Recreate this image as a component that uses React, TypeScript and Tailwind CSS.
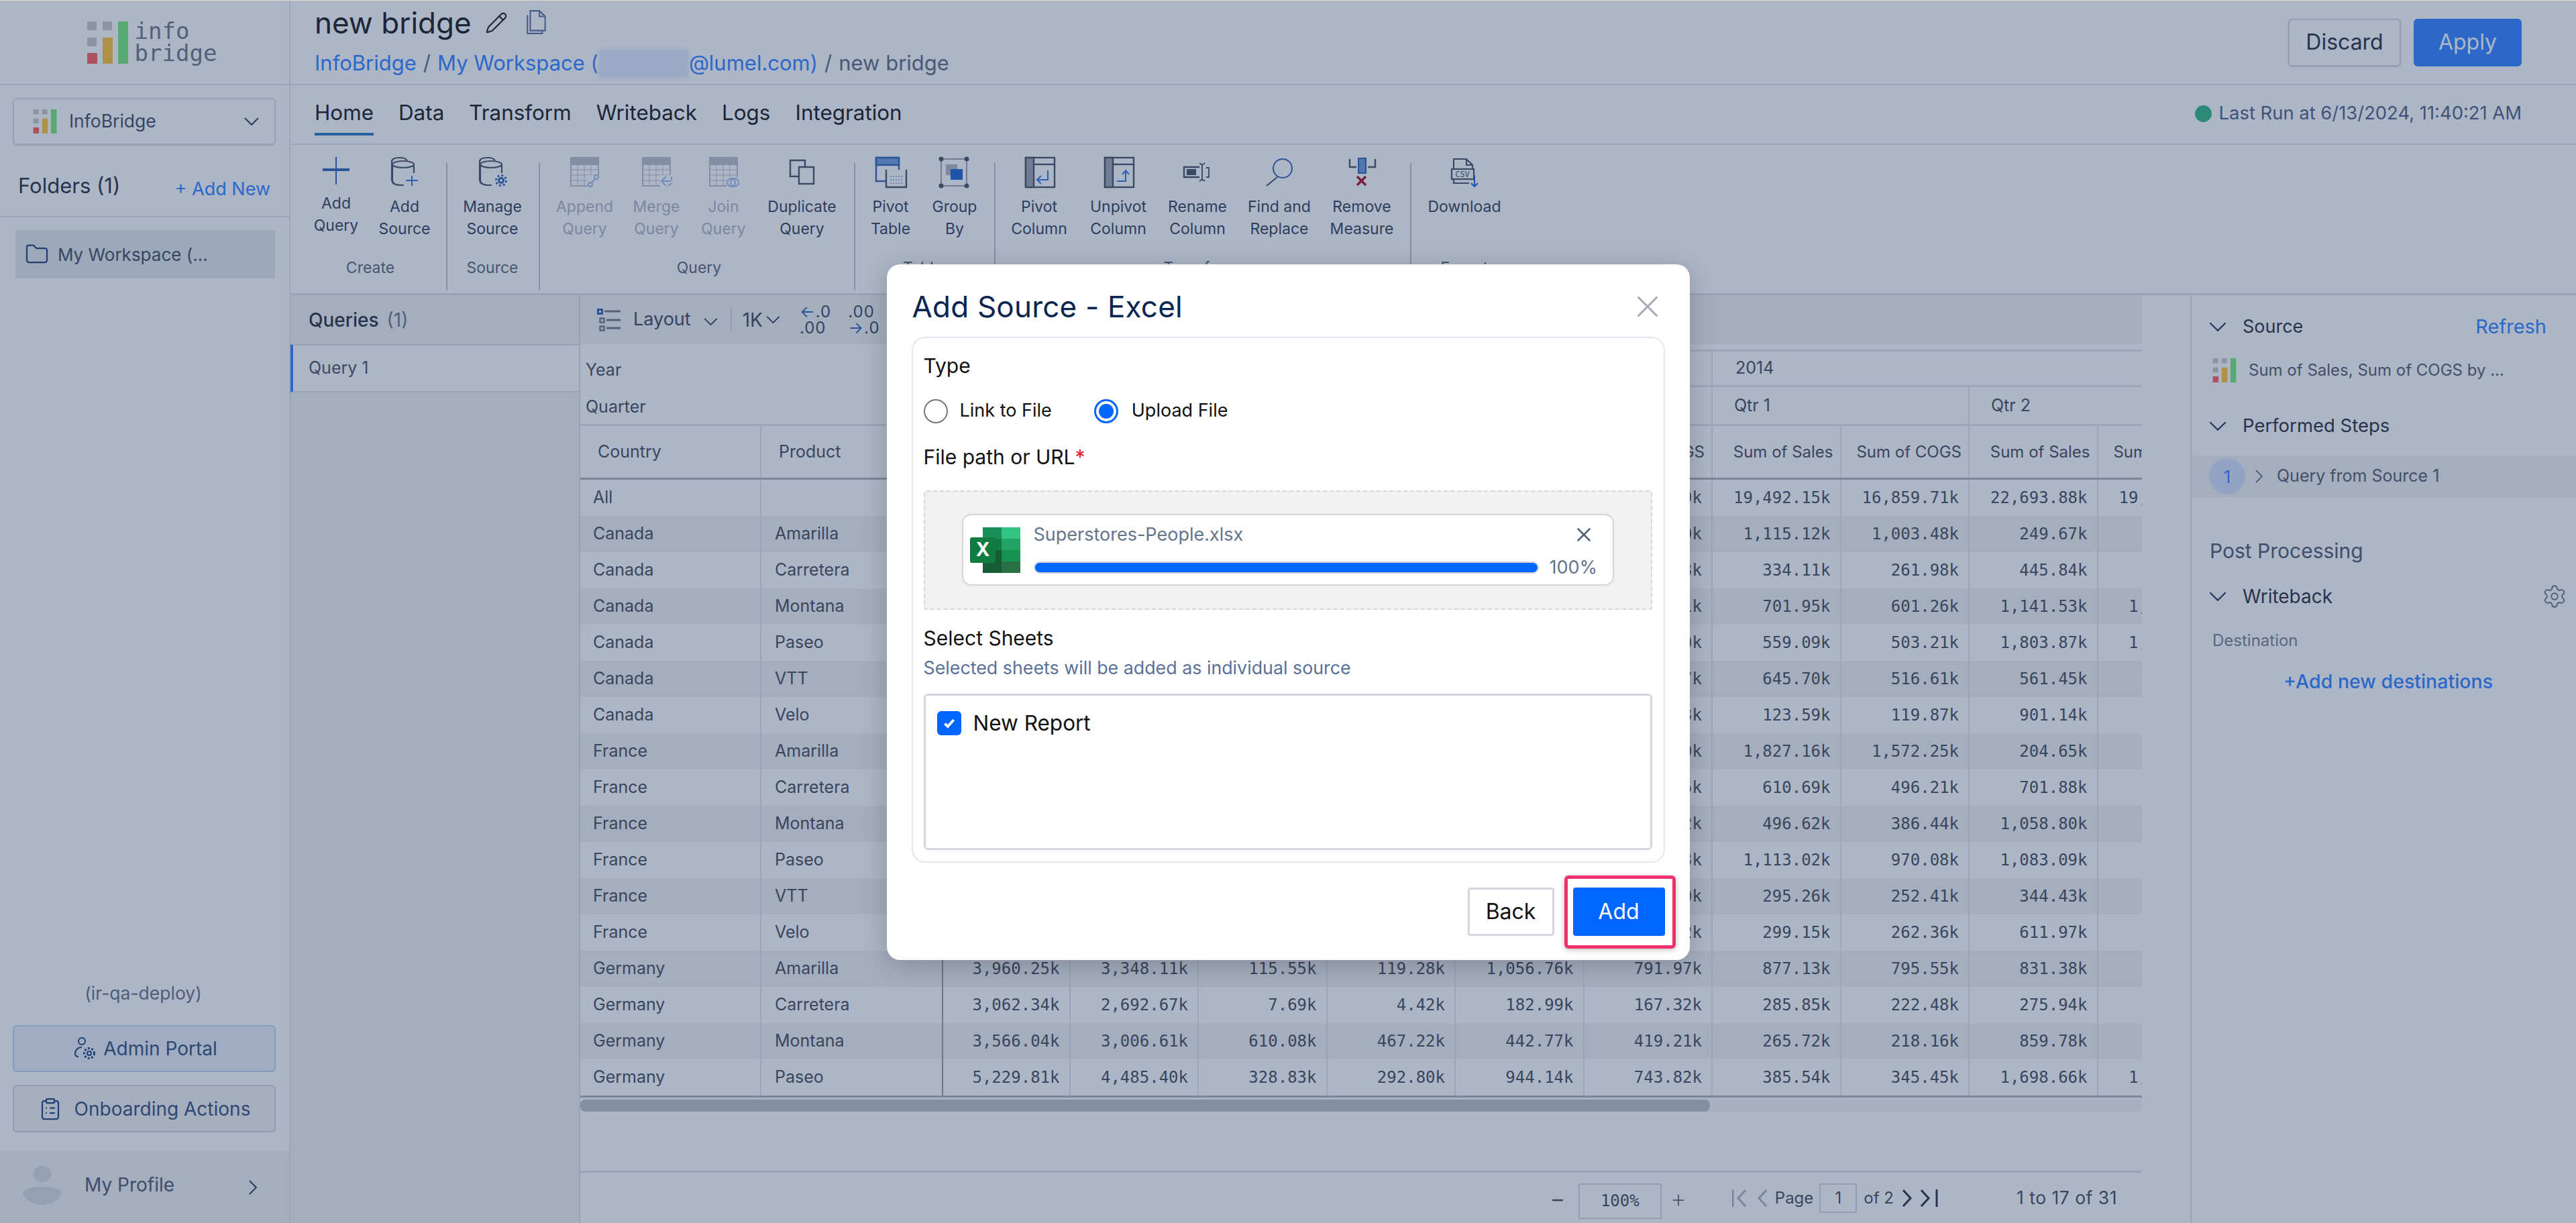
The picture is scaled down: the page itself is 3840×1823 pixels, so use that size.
import React from 'react';
import { Folder, Pencil, Plus, Minus, X, ClipboardList, Settings } from 'lucide-react';

const INK = '#565f6e';
const BLUE = '#3f7fe0';
const FADED = '#c2c5cc';
const FADED_BLUE = '#a9c0e8';

// three-bar product logo
const BarLogo = ({ className }: { className: string }) => (
  <svg viewBox="0 0 61 63" className={className}>
    <rect x="0" y="0" width="14" height="13" fill="#cfcccb" />
    <rect x="23" y="0" width="14" height="13" fill="#cfcccb" />
    <rect x="0" y="24" width="14" height="13" fill="#cfcccb" />
    <rect x="0" y="47" width="15" height="16" fill="#ff6b66" />
    <rect x="23" y="24" width="15" height="39" fill="#fec943" />
    <rect x="46" y="0" width="15" height="63" fill="#84eb83" />
  </svg>
);

const Chev = ({ className = 'w-[22px] h-[12px]', color = '#34415a' }: { className?: string; color?: string }) => (
  <svg viewBox="0 0 22 12" className={className} fill="none" stroke={color} strokeWidth="1.8">
    <path d="M1 1l10 10L21 1" />
  </svg>
);

const Icon = ({ children }: { children: React.ReactNode }) => (
  <svg viewBox="0 0 50 50" className="w-[50px] h-[50px] shrink-0" fill="none" strokeWidth="2">
    {children}
  </svg>
);

const Cylinders = () => (
  <g stroke={INK} strokeWidth="2.2">
    <path d="M6 14V9c0-4 5-6 12-6 6 0 10 2 11 5" />
    <path d="M6 14v22c0 3 2 5 5 6" />
    <ellipse cx="23" cy="13" rx="16" ry="5" fill="#fff" />
    <path d="M7 13v25c0 4 5 6 13 6h4" />
    <path d="M39 13v13" />
  </g>
);

const TableGrid = ({ color }: { color: string }) => (
  <g stroke={color}>
    <rect x="4" y="3" width="41" height="42" />
    <rect x="4" y="3" width="41" height="10" fill={color} />
    <path d="M4 21h41M4 29h41M4 37h41M14 13v32M24 13v32M34 13v32" strokeWidth="1" />
  </g>
);

const RIBBON_ICONS: Record<string, React.ReactNode> = {
  addQuery: (
    <Icon>
      <path d="M25 2v41" stroke="#3f6fb5" strokeWidth="2" />
      <path d="M5 21h40" stroke="#3f6fb5" strokeWidth="4" />
    </Icon>
  ),
  addSource: (
    <Icon>
      <Cylinders />
      <rect x="24" y="27" width="22" height="20" fill="#fff" />
      <path d="M36 30v15M27 37h18" stroke={BLUE} />
    </Icon>
  ),
  manage: (
    <Icon>
      <Cylinders />
      <rect x="27" y="28" width="21" height="19" fill="#fff" />
      <circle cx="38" cy="37" r="3.5" stroke="#3f6fb5" strokeWidth="3" />
      <circle cx="38" cy="37" r="7.5" stroke="#3f6fb5" strokeWidth="3" strokeDasharray="3 2.9" />
    </Icon>
  ),
  append: (
    <Icon>
      <TableGrid color={FADED} />
      <rect x="29" y="29" width="19" height="18" fill="#fff" />
      <circle cx="42" cy="32" r="3" stroke={FADED_BLUE} />
      <circle cx="33" cy="43" r="3" stroke={FADED_BLUE} />
      <path d="M40 35l-6 6" stroke={FADED_BLUE} />
    </Icon>
  ),
  merge: (
    <Icon>
      <TableGrid color={FADED} />
      <rect x="30" y="29" width="18" height="18" fill="#fff" />
      <path d="M39 31l-7 7 7 7M47 31v4c0 2-3 3-5 3h-9M42 45l5-4" stroke={FADED_BLUE} />
    </Icon>
  ),
  join: (
    <Icon>
      <TableGrid color={FADED} />
      <rect x="29" y="32" width="19" height="15" fill="#fff" />
      <ellipse cx="36" cy="40" rx="6" ry="6" stroke={FADED_BLUE} />
      <ellipse cx="41" cy="40" rx="6" ry="6" stroke={FADED_BLUE} />
    </Icon>
  ),
  duplicate: (
    <Icon>
      <path d="M20 31H7V7h22v10" stroke={INK} strokeWidth="2.4" />
      <rect x="20" y="17" width="22" height="25" stroke={INK} strokeWidth="2.4" />
    </Icon>
  ),
  pivotTable: (
    <Icon>
      <rect x="3" y="3" width="34" height="35" stroke="#3f6fb5" strokeWidth="2.4" />
      <rect x="3" y="3" width="34" height="11" fill="#7ba3dc" stroke="#3f6fb5" strokeWidth="2.4" />
      <path d="M18 21v26h30V21" fill="#fff" stroke={INK} strokeWidth="2.4" />
      <path d="M24 31h19M24 36h19M24 41h19" stroke="#9db4d6" strokeWidth="2" strokeDasharray="2 2" />
    </Icon>
  ),
  groupBy: (
    <Icon>
      <rect x="5" y="5" width="38" height="40" stroke="#a7acb6" strokeWidth="2" />
      <circle cx="5" cy="5" r="3.5" fill={INK} />
      <circle cx="43" cy="5" r="3.5" fill={INK} />
      <circle cx="5" cy="45" r="3.5" fill={INK} />
      <circle cx="43" cy="45" r="3.5" fill={INK} />
      <rect x="12" y="13" width="17" height="16" fill="#b9bdc5" />
      <rect x="19" y="20" width="18" height="16" fill="#2f6fd0" />
    </Icon>
  ),
  pivotCol: (
    <Icon>
      <rect x="5" y="3" width="43" height="44" stroke={INK} strokeWidth="2.4" />
      <rect x="5" y="3" width="12" height="44" fill="#a6abb5" stroke={INK} strokeWidth="2.4" />
      <path d="M17 13h31" stroke={INK} strokeWidth="2.4" />
      <path d="M38 22v14H23M28 30l-6 6 6 6" stroke="#3f7fe0" />
    </Icon>
  ),
  unpivotCol: (
    <Icon>
      <rect x="5" y="3" width="43" height="44" stroke={INK} strokeWidth="2.4" />
      <rect x="5" y="3" width="12" height="44" fill="#a6abb5" stroke={INK} strokeWidth="2.4" />
      <path d="M17 13h31" stroke={INK} strokeWidth="2.4" />
      <path d="M23 38h13V22M31 28l5-6 5 6" stroke="#3f7fe0" />
    </Icon>
  ),
  rename: (
    <Icon>
      <path d="M28 17H5v15h23" stroke={INK} strokeWidth="2.4" />
      <rect x="9" y="20" width="14" height="9" fill={INK} />
      <path d="M32 13v23M28 11l4 3 4-3M28 38l4-3 4 3M38 18h4v14h-4" stroke={INK} strokeWidth="1.8" />
    </Icon>
  ),
  find: (
    <Icon>
      <circle cx="30" cy="19" r="14" stroke="#3f6fb5" strokeWidth="2" />
      <path d="M22 32L6 45" stroke={INK} strokeWidth="2.2" />
    </Icon>
  ),
  remove: (
    <Icon>
      <path d="M7 5v12h10M45 5v12H34" stroke={INK} strokeWidth="2.4" />
      <rect x="20" y="4" width="11" height="22" fill="#7ba3dc" stroke="#3f6fb5" strokeWidth="2" />
      <path d="M18 31l13 13M31 31L18 44" stroke="#b3202f" strokeWidth="3.4" />
    </Icon>
  ),
  download: (
    <Icon>
      <path d="M9 20V5h19l9 9v6M28 5v9h9M9 35v6h23" stroke={INK} strokeWidth="2.2" />
      <rect x="6" y="20" width="33" height="15" stroke={INK} strokeWidth="2.2" fill="#fff" />
      <text x="22" y="32" textAnchor="middle" fontSize="12" fill={INK} fontFamily="DejaVu Sans Mono, monospace">
        CSV
      </text>
      <path d="M40 29v17M35 41l5 5 5-5" stroke="#2f6fd0" />
    </Icon>
  ),
};

const RibbonItem = ({
  icon,
  lines,
  width,
  disabled,
  lift,
}: {
  icon: string;
  lines: string[];
  width: string;
  disabled?: boolean;
  lift?: boolean;
}) => (
  <div className={`flex flex-col items-center shrink-0 ${width}`}>
    {RIBBON_ICONS[icon]}
    <div
      className={`text-center text-[23px] leading-[33px] ${lift ? 'mt-[5px]' : 'mt-[10px]'} ${
        disabled ? 'text-[#b8bbc3]' : 'text-[#444f60]'
      }`}
    >
      {lines.map((l) => (
        <div key={l}>{l}</div>
      ))}
    </div>
  </div>
);

const RibbonGroup = ({
  label,
  className,
  children,
}: {
  label: string;
  className: string;
  children: React.ReactNode;
}) => (
  <div className={`flex flex-col shrink-0 pt-[16px] ${className}`}>
    <div className="flex flex-1">{children}</div>
    <div className="h-[33px] mb-[21px] text-center text-[23px] leading-[33px] text-[#6a7280]">{label}</div>
  </div>
);

const RibbonDivider = () => <div className="self-end w-[2px] h-[190px] mb-[4px] bg-[#c4c8ce] shrink-0" />;

const MONO = "font-['DejaVu_Sans_Mono',monospace]";

const TABLE_ROWS: string[][] = [
  ['All', '', '16,420.09k', '19,492.15k', '16,859.71k', '22,693.88k', '19,112.52k'],
  ['Canada', 'Amarilla', '890.19k', '1,115.12k', '1,003.48k', '249.67k', '215.40k'],
  ['Canada', 'Carretera', '272.23k', '334.11k', '261.98k', '445.84k', '392.75k'],
  ['Canada', 'Montana', '611.31k', '701.95k', '601.26k', '1,141.53k', '1,012.33k'],
  ['Canada', 'Paseo', '500.10k', '559.09k', '503.21k', '1,803.87k', '1,580.28k'],
  ['Canada', 'VTT', '498.57k', '645.70k', '516.61k', '561.45k', '487.90k'],
  ['Canada', 'Velo', '116.43k', '123.59k', '119.87k', '901.14k', '786.11k'],
  ['France', 'Amarilla', '1,401.20k', '1,827.16k', '1,572.25k', '204.65k', '176.34k'],
  ['France', 'Carretera', '512.35k', '610.69k', '496.21k', '701.88k', '603.52k'],
  ['France', 'Montana', '402.12k', '496.62k', '386.44k', '1,058.80k', '914.67k'],
  ['France', 'Paseo', '890.73k', '1,113.02k', '970.08k', '1,083.09k', '932.18k'],
  ['France', 'VTT', '240.50k', '295.26k', '252.41k', '344.43k', '298.06k'],
  ['France', 'Velo', '255.32k', '299.15k', '262.36k', '611.97k', '530.44k'],
  ['Germany', 'Amarilla', '791.97k', '877.13k', '795.55k', '831.38k', '702.19k'],
  ['Germany', 'Carretera', '167.32k', '285.85k', '222.48k', '275.94k', '233.81k'],
  ['Germany', 'Montana', '419.21k', '265.72k', '218.16k', '859.78k', '745.02k'],
  ['Germany', 'Paseo', '743.82k', '385.54k', '345.45k', '1,698.66k', '1,512.40k'],
];

// the first five value columns are only readable on the Germany rows, the rest sit under the dialog
const GERMANY_HEAD: Record<string, string[]> = {
  Amarilla: ['3,960.25k', '3,348.11k', '115.55k', '119.28k', '1,056.76k'],
  Carretera: ['3,062.34k', '2,692.67k', '7.69k', '4.42k', '182.99k'],
  Montana: ['3,566.04k', '3,006.61k', '610.08k', '467.22k', '442.77k'],
  Paseo: ['5,229.81k', '4,485.40k', '328.83k', '292.80k', '944.14k'],
};

const ValueCell = ({ value, first }: { value: string; first?: boolean }) => (
  <div
    className={`w-[191.5px] shrink-0 h-full flex items-center justify-end pr-[14px] border-r-2 border-[#e4e6ea] text-[24px] text-[#555a62] ${MONO} ${
      first ? 'border-l-2 border-l-[#a2a3a4]' : ''
    }`}
  >
    {value}
  </div>
);

const Sidebar = () => (
  <aside className="w-[433px] shrink-0 flex flex-col border-r-2 border-[#e4e6ea]">
    <div className="h-[126px] shrink-0 flex items-center justify-center gap-[10px] pl-[22px] border-b-2 border-[#e2e4e9]">
      <BarLogo className="w-[61px] h-[63px]" />
      <div className={`text-[34px] leading-[33px] text-[#7b808b] ${MONO}`}>
        <div>info</div>
        <div>bridge</div>
      </div>
    </div>
    <div className="mt-[19px] ml-[19px] w-[392px] h-[70px] shrink-0 flex items-center pl-[28px] pr-[23px] border-2 border-[#dfe2e8] rounded-md shadow-sm">
      <BarLogo className="w-[36px] h-[36px]" />
      <span className="ml-[18px] flex-1 text-[26.5px] text-[#515a68]">InfoBridge</span>
      <Chev />
    </div>
    <div className="h-[108px] shrink-0 pt-[16px] pl-[27px] pr-[28px] flex items-center justify-between border-b-2 border-[#e6e8ec]">
      <span className="text-[31px] text-[#3a3f48]">Folders (1)</span>
      <span className="mt-[10px] text-[27px] text-[#418dff]">+ Add New</span>
    </div>
    <div className="mt-[19px] ml-[23px] w-[387px] h-[72px] shrink-0 flex items-center pl-[14px] bg-[#e8ebed]">
      <Folder className="w-[36px] h-[36px] text-[#32507f]" strokeWidth={1.5} />
      <span className="ml-[13px] text-[26px] text-[#515a68]">My Workspace (...</span>
    </div>
    <div className="flex-1" />
    <div className="text-center text-[26.5px] h-[32px] leading-[32px] pr-[4px] text-[#747d8c]">(ir-qa-deploy)</div>
    <button className="mt-[32px] ml-[19px] w-[392px] h-[70px] shrink-0 flex items-center justify-center gap-[10px] pl-[4px] rounded-md border-2 border-[#c4d7ee] bg-[#eaf1f8] text-[28px] text-[#445c83]">
      <svg viewBox="0 0 34 34" className="w-[34px] h-[34px]" fill="none" stroke="#32507f" strokeWidth="2">
        <circle cx="12" cy="6" r="5" />
        <path d="M12 15C6 15 2 19 2 25c0 3 2 4 5 4" />
        <circle cx="23" cy="24" r="3" />
        <circle cx="23" cy="24" r="7.5" strokeDasharray="3 2.5" strokeWidth="3" />
      </svg>
      Admin Portal
    </button>
    <button className="mt-[19px] ml-[19px] w-[392px] h-[71px] shrink-0 flex items-center justify-center gap-[18px] rounded-md border-2 border-[#d5d9df] bg-[#f4f4f4] text-[28px] text-[#445c83]">
      <ClipboardList className="w-[36px] h-[36px] text-[#32507f]" strokeWidth={1.5} />
      Onboarding Actions
    </button>
    <div className="mt-[28px] h-[107px] shrink-0 flex items-center pl-[34px] pr-[48px] bg-[#f4f4f4]">
      <svg viewBox="0 0 58 58" className="w-[58px] h-[58px] mt-[-6px] shrink-0" fill="#dcdfe4">
        <ellipse cx="29" cy="12" rx="13" ry="12" />
        <path d="M29 31c16 0 27 3 29 10-3 9-15 17-29 17S3 50 0 41c2-7 13-10 29-10z" />
      </svg>
      <span className="ml-[34px] flex-1 text-[28px] text-[#5c6574] mt-[-8px]">My Profile</span>
      <svg viewBox="0 0 12 22" className="w-[12px] h-[22px]" fill="none" stroke="#34415a" strokeWidth="1.8">
        <path d="M1 1l10 10L1 21" />
      </svg>
    </div>
  </aside>
);

const TopBar = () => (
  <div className="h-[126px] shrink-0 flex items-center justify-between pl-[36px] pr-[81px] border-b-2 border-[#e2e4e9]">
    <div className="flex flex-col">
      <div className="flex items-center h-[56px] mt-[-2px]">
        <span className="text-[44px] text-[#2b2b2b]">new bridge</span>
        <Pencil className="ml-[20px] w-[34px] h-[34px] text-[#2b2b2b]" strokeWidth={1.5} />
        <svg viewBox="0 0 30 36" className="ml-[28px] w-[32px] h-[38px] mt-[-3px]" fill="none" stroke="#6a7ea0" strokeWidth="2">
          <path d="M5 2h13l8 8v20H5zM18 2v8h8" />
          <path d="M1 8v26h21v-3" />
        </svg>
      </div>
      <div className="flex items-center text-[31px] text-[#6e7685] mt-[9px]">
        <span className="text-[#418dff]">InfoBridge</span>
        <span className="mx-[10px]">/</span>
        <span className="text-[#418dff]">My Workspace (</span>
        <span className="w-[135px] h-[44px] bg-[#e5edfb] blur-[2px] shrink-0" />
        <span className="text-[#418dff]">@lumel.com)</span>
        <span className="mx-[10px]">/</span>
        <span>new bridge</span>
      </div>
    </div>
    <div className="flex gap-[19px]">
      <button className="w-[168px] h-[71px] rounded-md border-2 border-[#d7dae0] text-[32px] text-[#3a3f48] shadow-sm">
        Discard
      </button>
      <button className="w-[161px] h-[71px] rounded-md bg-[#418dff] text-[32px] text-white">Apply</button>
    </div>
  </div>
);

const TabsBar = () => (
  <div className="h-[89px] shrink-0 flex justify-between pl-[36px] pr-[81px] border-b-2 border-[#e6e8ec]">
    <div className="flex gap-[37px] text-[31.4px] text-[#2b2b2b]">
      {['Home', 'Data', 'Transform', 'Writeback', 'Logs', 'Integration'].map((t, i) => (
        <div key={t} className="relative h-[66px] flex items-center mt-[9px]">
          {t}
          {i === 0 && <div className="absolute left-0 right-0 bottom-0 h-[4px] bg-[#3f7fc6]" />}
        </div>
      ))}
    </div>
    <div className="flex items-center gap-[11px] text-[27.4px] text-[#5f6d8a] mb-[3px]">
      <span className="w-[25px] h-[25px] rounded-full bg-[#41c089]" />
      Last Run at 6/13/2024, 11:40:21 AM
    </div>
  </div>
);

const Ribbon = () => (
  <div className="h-[224px] shrink-0 flex border-b-[3px] border-[#e2e4e9] bg-white">
    <RibbonGroup label="Create" className="pl-[17px] pr-[11px]">
      <RibbonItem icon="addQuery" lines={['Add', 'Query']} width="w-[102px]" lift />
      <RibbonItem icon="addSource" lines={['Add', 'Source']} width="w-[102px]" />
    </RibbonGroup>
    <RibbonDivider />
    <RibbonGroup label="Source" className="w-[136px] pr-[2px]">
      <RibbonItem icon="manage" lines={['Manage', 'Source']} width="w-[134px]" />
    </RibbonGroup>
    <RibbonDivider />
    <RibbonGroup label="Query" className="pl-[13px] pr-[7px]">
      <RibbonItem icon="append" lines={['Append', 'Query']} width="w-[107px]" disabled />
      <RibbonItem icon="merge" lines={['Merge', 'Query']} width="w-[107px]" disabled />
      <RibbonItem icon="join" lines={['Join', 'Query']} width="w-[93px]" disabled />
      <RibbonItem icon="duplicate" lines={['Duplicate', 'Query']} width="w-[141px]" />
    </RibbonGroup>
    <RibbonDivider />
    <RibbonGroup label="Table" className="pl-[5px] pr-[11px]">
      <RibbonItem icon="pivotTable" lines={['Pivot', 'Table']} width="w-[95px]" />
      <RibbonItem icon="groupBy" lines={['Group', 'By']} width="w-[96px]" />
    </RibbonGroup>
    <RibbonDivider />
    <RibbonGroup label="Transform" className="pl-[6px] pr-[12px]">
      <RibbonItem icon="pivotCol" lines={['Pivot', 'Column']} width="w-[118px]" />
      <RibbonItem icon="unpivotCol" lines={['Unpivot', 'Column']} width="w-[118px]" />
      <RibbonItem icon="rename" lines={['Rename', 'Column']} width="w-[118px]" />
      <RibbonItem icon="find" lines={['Find and', 'Replace']} width="w-[126px]" />
      <RibbonItem icon="remove" lines={['Remove', 'Measure']} width="w-[120px]" />
    </RibbonGroup>
    <RibbonDivider />
    <RibbonGroup label="Export" className="">
      <RibbonItem icon="download" lines={['Download']} width="w-[158px]" />
    </RibbonGroup>
  </div>
);

const QueriesPanel = () => (
  <div className="w-[432px] shrink-0 bg-[#f4f4f4] border-r-2 border-[#e2e4e9]">
    <div className="h-[73px] flex items-center pl-[27px] text-[28px] font-medium text-[#3a3f48]">
      Queries
      <span className="ml-[12px] font-normal text-[#7b818b]">(1)</span>
    </div>
    <div className="h-[72px] flex items-center pl-[23px] border-l-4 border-[#418dff] border-b-2 border-b-[#e6e8ec] border-t-2 border-t-[#e2e4e9] bg-white text-[25px] text-[#5c616a]">
      Query 1
    </div>
  </div>
);

const TableToolbar = () => (
  <div className="h-[73px] shrink-0 flex items-center pl-[25px] bg-[#f3f3f3] text-[#4d5766]">
    <svg viewBox="0 0 36 34" className="w-[36px] h-[34px]" fill="none" strokeWidth="3">
      <rect x="1.5" y="1.5" width="6" height="6" stroke="#3f6fb5" />
      <path d="M11 4h24" stroke="#7d828b" />
      <rect x="4.5" y="14.5" width="6" height="6" stroke="#7d828b" strokeWidth="2.4" />
      <path d="M14 17h21" stroke="#7d828b" />
      <rect x="4.5" y="26.5" width="6" height="6" stroke="#7d828b" strokeWidth="2.4" />
      <path d="M14 29h21" stroke="#7d828b" />
    </svg>
    <span className="ml-[18px] text-[27px]">Layout</span>
    <Chev className="ml-[19px] w-[21px] h-[11px] mt-[6px]" />
    <div className="ml-[19px] w-[2px] h-[34px] bg-[#d7dae0]" />
    <span className="ml-[16px] text-[28px]">1K</span>
    <Chev className="ml-[5px] w-[21px] h-[11px]" />
    <div className="ml-[29px] flex flex-col text-[24px] leading-[24px] tracking-[1px]">
      <span>
        <span className="text-[#3f6fb5]">←</span>.0
      </span>
      <span>.00</span>
    </div>
    <div className="ml-[25px] flex flex-col text-[24px] leading-[24px] tracking-[1px]">
      <span>.00</span>
      <span>
        <span className="text-[#3f6fb5]">→</span>.0
      </span>
    </div>
  </div>
);

const PivotTable = () => (
  <div className="w-[2328px] shrink-0 flex flex-col h-full">
    <TableToolbar />
    <div className="flex h-[64px] shrink-0 overflow-hidden">
      <div className="w-[539px] shrink-0 pl-[8px] pt-[20px] text-[25px] leading-[36px] text-[#555a62]">Year</div>
      <div className="w-[1149px] shrink-0 mt-[8px] border-y-[3px] border-[#e6e8ec] border-r-2" />
      <div className="flex-1 mt-[8px] pl-[34px] flex items-center border-y-[3px] border-[#e6e8ec] text-[25px] text-[#555a62]">
        2014
      </div>
    </div>
    <div className="flex h-[58px] shrink-0 border-b-[3px] border-[#e6e8ec] overflow-hidden">
      <div className="w-[539px] shrink-0 pl-[8px] pt-[11px] text-[25px] leading-[36px] text-[#555a62]">Quarter</div>
      <div className="w-[1149px] shrink-0 border-r-2 border-[#e6e8ec]" />
      <div className="w-[383px] shrink-0 pl-[32px] flex items-center border-r-2 border-[#e6e8ec] text-[25px] text-[#555a62]">
        Qtr 1
      </div>
      <div className="flex-1 pl-[32px] flex items-center text-[25px] text-[#555a62]">Qtr 2</div>
    </div>
    <div className="flex h-[80px] shrink-0 border-b-[3px] border-[#b6b9bf] overflow-hidden text-[25px] text-[#555a62]">
      <div className="w-[270px] shrink-0 pl-[26px] flex items-center border-r-2 border-[#e6e8ec]">Country</div>
      <div className="w-[269px] shrink-0 pl-[26px] flex items-center">Product</div>
      {['Sum of Sales', 'Sum of COGS', 'Sum of Sales', 'Sum of COGS', 'Sum of Sales', 'Sum of COGS', 'Sum of Sales', 'Sum of COGS', 'Sum of Sales', 'Sum of COGS'].map(
        (h, i) => (
          <div
            key={i}
            className={`w-[191.5px] shrink-0 flex items-center justify-end pr-[10px] text-[24px] whitespace-nowrap border-r-2 border-[#e6e8ec] ${
              i === 0 ? 'border-l-2 border-l-[#a2a3a4]' : ''
            }`}
          >
            {h}
          </div>
        ),
      )}
    </div>
    <div className="overflow-hidden border-b-[3px] border-[#b6b9bf] shrink-0">
      {TABLE_ROWS.map(([country, product, last2013, a, b, c, d], i) => {
        const head = country === 'Germany' ? GERMANY_HEAD[product] : ['', '', '', '', ''];
        return (
          <div key={i} className={`flex h-[54px] text-[25px] text-[#555a62] ${i % 2 ? 'bg-[#f3f3f3]' : ''}`}>
            <div className="w-[270px] shrink-0 pl-[19px] flex items-center border-r-2 border-[#e6e8ec]">{country}</div>
            <div className="w-[269px] shrink-0 pl-[20px] flex items-center">{product}</div>
            {[...head, last2013, a, b, c, d].map((v, j) => (
              <ValueCell key={j} value={v} first={j === 0} />
            ))}
          </div>
        );
      })}
    </div>
    <div className="mt-[3px] h-[18px] shrink-0 rounded-lg bg-[#f6f6f7]">
      <div className="w-[1684px] h-full rounded-lg bg-[#c3c6cb]" />
    </div>
    <div className="flex-1" />
    <div className="h-[78px] shrink-0 flex items-center justify-end pr-[37px] border-t-[3px] border-[#e2e4e9] text-[24px] text-[#555a62]">
      <Minus className="w-[24px] h-[24px] mt-[6px]" strokeWidth={2.4} />
      <div className={`ml-[19px] w-[124px] h-[53px] mt-[9px] flex items-center justify-center border-2 border-[#d7dae0] text-[24px] ${MONO}`}>
        100%
      </div>
      <Plus className="ml-[12px] w-[26px] h-[26px] mt-[6px]" strokeWidth={1.5} />
      <svg viewBox="0 0 54 26" className="ml-[67px] w-[54px] h-[26px]" fill="none" stroke="#b5b9c0" strokeWidth="3">
        <path d="M1 0v26M20 1L9 13l11 12M51 1L40 13l11 12" />
      </svg>
      <span className="ml-[10px]">Page</span>
      <div className="ml-[9px] w-[56px] h-[44px] flex items-center justify-center border-2 border-[#d7dae0]">1</div>
      <span className="ml-[10px]">of 2</span>
      <svg viewBox="0 0 54 26" className="ml-[12px] w-[54px] h-[26px]" fill="none" stroke="#3a3f48" strokeWidth="3">
        <path d="M2 1l11 12L2 25M29 1l11 12-11 12M52 0v26" />
      </svg>
      <span className="ml-[117px] text-[26.5px] tracking-[0.5px]">1 to 17 of 31</span>
    </div>
  </div>
);

const RightPanel = () => (
  <div className="flex-1 flex flex-col ml-[72px] border-l-2 border-[#e2e4e9] text-[#3a3f48]">
    <div className="h-[94px] shrink-0 flex items-center pl-[26px] pr-[44px]">
      <Chev className="w-[26px] h-[14px]" />
      <span className="ml-[24px] flex-1 text-[27px]">Source</span>
      <span className="text-[29px] text-[#418dff]">Refresh</span>
    </div>
    <div className="h-[36px] shrink-0 flex items-center pl-[31px]">
      <BarLogo className="w-[36px] h-[36px]" />
      <span className="ml-[18px] text-[24px] text-[#636973]">Sum of Sales, Sum of COGS by ...</span>
    </div>
    <div className="mt-[35px] h-[60px] shrink-0 flex items-center pl-[26px]">
      <Chev className="w-[26px] h-[14px]" />
      <span className="ml-[24px] text-[27.5px]">Performed Steps</span>
    </div>
    <div className="mt-[14px] h-[62px] shrink-0 flex items-center pl-[26px] bg-[#f3f3f3]">
      <span className="w-[54px] h-[54px] rounded-full bg-[#d7e3f9] flex items-center justify-center text-[26px] text-[#418dff]">
        1
      </span>
      <svg viewBox="0 0 12 22" className="ml-[15px] w-[11px] h-[20px]" fill="none" stroke="#4d5766" strokeWidth="1.6">
        <path d="M1 1l10 10L1 21" />
      </svg>
      <span className="ml-[21px] text-[25px] text-[#636973]">Query from Source 1</span>
    </div>
    <div className="mt-[60px] h-[40px] shrink-0 flex items-center pl-[27px] text-[30px] text-[#5d6676]">Post Processing</div>
    <div className="mt-[23px] h-[50px] shrink-0 flex items-center pl-[26px] pr-[13px]">
      <Chev className="w-[26px] h-[14px]" />
      <span className="ml-[24px] flex-1 text-[28px]">Writeback</span>
      <Settings className="w-[38px] h-[38px] text-[#727c8c]" strokeWidth={1.2} />
    </div>
    <div className="mt-[25px] h-[32px] shrink-0 flex items-center pl-[31px] text-[24px] text-[#858b96]">Destination</div>
    <div className="mt-[27px] h-[36px] shrink-0 flex items-center pl-[137px] text-[28.5px] font-medium text-[#418dff]">
      +Add new destinations
    </div>
  </div>
);

const ExcelIcon = () => (
  <svg viewBox="0 0 75 68" className="w-[75px] h-[68px] shrink-0">
    <rect x="19" y="0" width="56" height="68" rx="3" fill="#21a366" />
    <rect x="47" y="0" width="28" height="17" fill="#33c481" />
    <rect x="19" y="0" width="28" height="17" fill="#1a8f57" />
    <rect x="19" y="17" width="28" height="17" fill="#107c41" />
    <rect x="47" y="34" width="28" height="17" fill="#16914f" />
    <rect x="19" y="34" width="28" height="17" fill="#185c37" />
    <rect x="19" y="51" width="28" height="17" fill="#185c37" />
    <rect x="47" y="51" width="28" height="17" fill="#2b7044" />
    <rect x="0" y="15" width="38" height="38" rx="3" fill="#107c41" />
    <text x="19" y="43" textAnchor="middle" fontSize="28" fontWeight="700" fill="#fff" fontFamily="Inter, sans-serif">
      X
    </text>
  </svg>
);

const AddSourceModal = () => (
  <div className="absolute inset-0 flex items-center justify-center bg-[rgba(0,28,80,0.32)]">
    <div className="w-[1197px] h-[1037px] rounded-[20px] bg-white px-[37px] flex flex-col shadow-[0_8px_40px_rgba(0,0,0,0.2)] font-['Inter',sans-serif]">
      <div className="h-[108px] shrink-0 flex items-center justify-between pt-[18px] pr-[11px]">
        <span className="text-[44px] leading-[54px] text-[#0a2550] ml-[1px] tracking-[0.2px]">Add Source - Excel</span>
        <X className="w-[54px] h-[54px] text-[#a5acb6] mr-[-12px]" strokeWidth={1.4} />
      </div>
      <div className="border-2 border-[#e4e8ee] rounded-[20px] pt-[22px] pl-[16px] pr-[17px] pb-[17px] shrink-0">
        <div className="h-[40px] flex items-center text-[30px] text-[#111]">Type</div>
        <div className="mt-[29px] h-[36px] flex items-center text-[27px] text-[#111]">
          <span className="w-[36px] h-[36px] rounded-full border-2 border-[#777]" />
          <span className="ml-[18px]">Link to File</span>
          <span className="ml-[63px] w-[36px] h-[36px] rounded-full border-[3px] border-[#0066ff] flex items-center justify-center">
            <span className="w-[22px] h-[22px] rounded-full bg-[#0066ff]" />
          </span>
          <span className="ml-[20px]">Upload File</span>
        </div>
        <div className="mt-[31px] h-[40px] flex items-center text-[30px] text-[#111]">
          File path or URL<span className="text-[#e02020]">*</span>
        </div>
        <div className="mt-[29px] h-[178px] flex items-center justify-center rounded border-2 border-dashed border-[#d5d7dc] bg-[#f1f1f2]">
          <div className="w-[972px] h-[107px] flex items-center pl-[10px] pr-[26px] bg-white border-2 border-[#d2d5da] rounded-[14px]">
            <ExcelIcon />
            <div className="ml-[20px] flex-1 flex flex-col gap-[17px]">
              <div className="h-[36px] flex items-center justify-between text-[27px] text-[#64748b]">
                Superstores-People.xlsx
                <X className="w-[34px] h-[34px] text-[#52617a] mr-[3px]" strokeWidth={1.8} />
              </div>
              <div className="h-[28px] flex items-center gap-[16px]">
                <div className="w-[753px] h-[18px] rounded-full border-2 border-[#cfd2d8] bg-[#0066ff]" />
                <span className="text-[27px] text-[#64748b]">100%</span>
              </div>
            </div>
          </div>
        </div>
        <div className="mt-[23px] h-[40px] flex items-center text-[30px] text-[#111]">Select Sheets</div>
        <div className="mt-[6px] h-[36px] flex items-center text-[26.8px] text-[#5b7098]">
          Selected sheets will be added as individual source
        </div>
        <div className="mt-[20px] h-[233px] rounded-md border-[3px] border-[#d3d6dc] pl-[17px] pt-[23px]">
          <div className="flex items-center gap-[18px] text-[31.5px] text-[#111] h-[36px]">
            <span className="w-[36px] h-[36px] rounded-md bg-[#0066ff] flex items-center justify-center">
              <svg viewBox="0 0 20 20" className="w-[22px] h-[22px]" fill="none" stroke="#fff" strokeWidth="3.6">
                <path d="M4 10.5l4 4 8-9" />
              </svg>
            </span>
            New Report
          </div>
        </div>
      </div>
      <div className="mt-[37px] flex justify-end gap-[28px]">
        <button className="w-[129px] h-[72px] rounded border-[3px] border-[#d3d6dc] text-[32px] text-[#111]">Back</button>
        <button className="relative w-[137px] h-[72px] rounded bg-[#0066ff] text-[32px] text-white">
          Add
          <span className="absolute -left-[13px] -right-[16px] -top-[18px] -bottom-[19px] rounded-md border-[5px] border-[#f0326a] shadow-[0_2px_8px_rgba(0,0,0,0.25)]" />
        </button>
      </div>
    </div>
  </div>
);

export default function App() {
  return (
    <div className="relative w-[3840px] h-[1823px] overflow-hidden flex border-t border-[#d9d9d2] bg-white font-['Inter',sans-serif]">
      <Sidebar />
      <main className="flex-1 min-w-0 flex flex-col">
        <TopBar />
        <TabsBar />
        <Ribbon />
        <div className="flex-1 min-h-0 flex">
          <QueriesPanel />
          <PivotTable />
          <RightPanel />
        </div>
      </main>
      <AddSourceModal />
    </div>
  );
}
